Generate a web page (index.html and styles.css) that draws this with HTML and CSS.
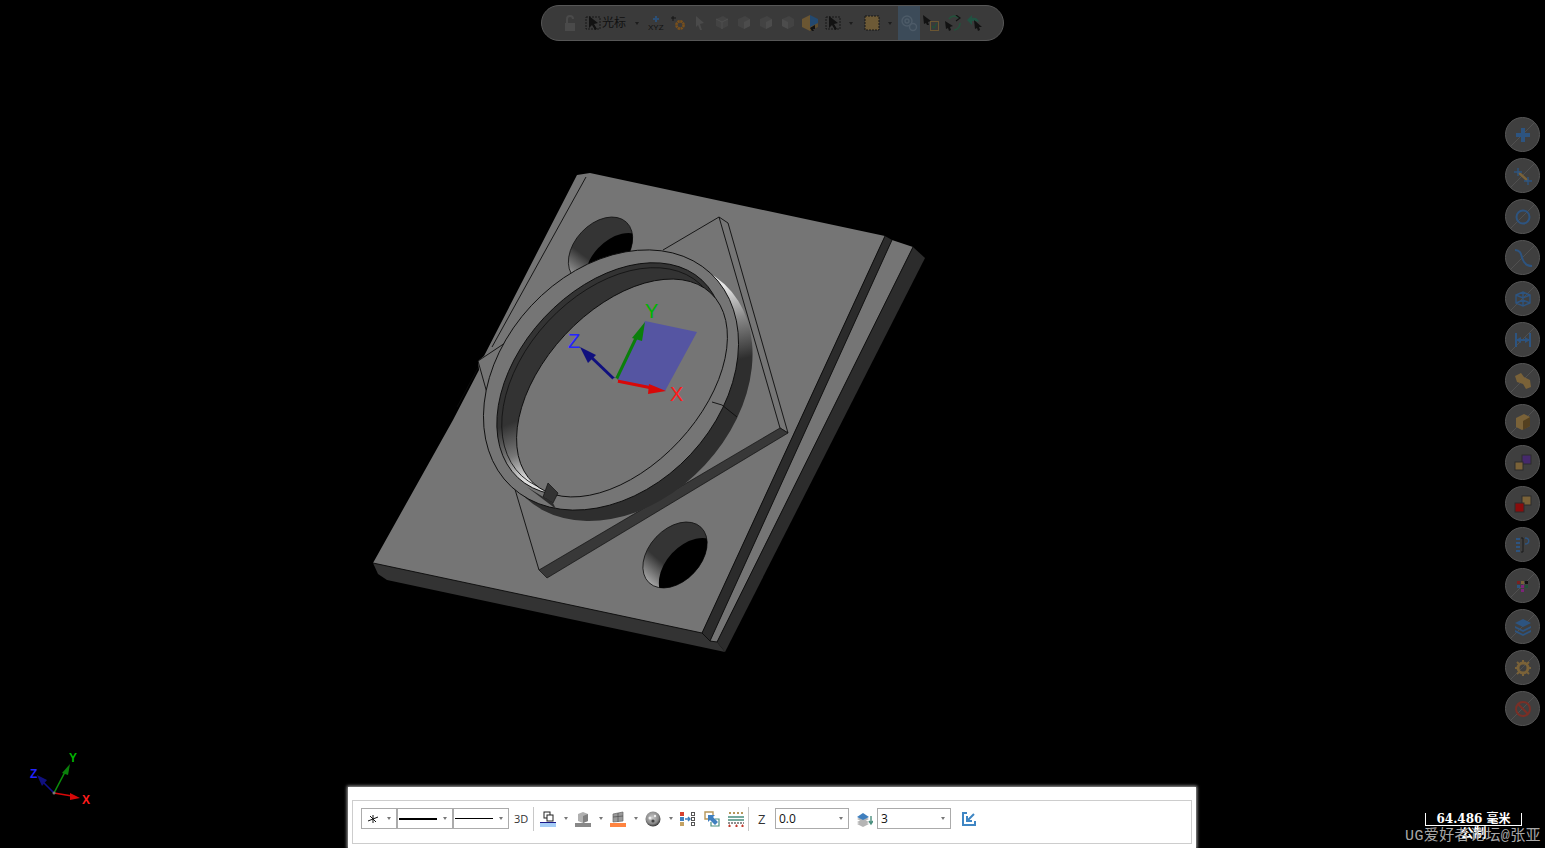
FILE: index.html
```html
<!DOCTYPE html>
<html lang="zh">
<head>
<meta charset="utf-8">
<title>NX</title>
<link rel="stylesheet" href="styles.css">
</head>
<body>
<main class="viewport">
  <svg class="scene" width="1545" height="848" viewBox="0 0 1545 848">
    <defs>
      <linearGradient id="wallGrad" gradientUnits="userSpaceOnUse" x1="728" y1="285" x2="746" y2="358" gradientTransform="rotate(47 625 391)">
        <stop offset="0" stop-color="#e8e8e8"/><stop offset=".45" stop-color="#8a8a8a"/><stop offset="1" stop-color="#2e2e2e"/>
      </linearGradient>
      <linearGradient id="crescentGrad" gradientUnits="userSpaceOnUse" x1="506" y1="425" x2="528" y2="478" gradientTransform="rotate(47 610 379)">
        <stop offset="0" stop-color="#333"/><stop offset=".55" stop-color="#777"/><stop offset="1" stop-color="#ddd"/>
      </linearGradient>
      <linearGradient id="holeGradB" gradientUnits="userSpaceOnUse" x1="665" y1="565" x2="650" y2="582" gradientTransform="rotate(47 675 555)">
        <stop offset="0" stop-color="#343434"/><stop offset="1" stop-color="#a0a0a0"/>
      </linearGradient>
      <linearGradient id="holeGradA" gradientUnits="userSpaceOnUse" x1="590" y1="260" x2="575" y2="280" gradientTransform="rotate(47 600.5 250)">
        <stop offset="0" stop-color="#343434"/><stop offset="1" stop-color="#a0a0a0"/>
      </linearGradient>
      <radialGradient id="sphereGrad" cx=".45" cy=".4" r=".6">
        <stop offset="0" stop-color="#c8c8c8"/><stop offset=".7" stop-color="#8a8a8a"/><stop offset="1" stop-color="#333"/>
      </radialGradient>
      <clipPath id="holeClipA"><ellipse cx="600.5" cy="250" rx="38" ry="26" transform="rotate(-47 600.5 250)"/></clipPath>
      <clipPath id="holeClipB"><ellipse cx="675" cy="555" rx="38" ry="26" transform="rotate(-47 675 555)"/></clipPath>
    </defs>

    <polygon class="side" points="373,563 378,574 387,580 725,652 717,642 710,641 702,633"/>
    <polygon class="face" points="577,175 590,173 885,236 702,633 373,563 453,420 479,370 478,361 484,356"/>
    <polygon class="groove" points="885,236 892,240 710,641 702,633"/>
    <polygon class="face" points="892,240 913,247 717,642 710,641"/>
    <polygon class="side-dark" points="913,247 925,258 725,652 717,642"/>
    <path class="edge" d="M373 563L702 633M885 236L702 633M892 240L710 641M913 247L717 642M586 177L492 347M457 407L478 368M478 361L505 343M478 361L487 393M702 633L710 641M710 641L717 642"/>

    <ellipse class="hole-wall-a" cx="600.5" cy="250" rx="38" ry="26" transform="rotate(-47 600.5 250)"/>
    <g clip-path="url(#holeClipA)"><ellipse class="void" cx="617" cy="266" rx="38" ry="26" transform="rotate(-47 617 266)"/></g>
    <ellipse class="hole-wall-b" cx="675" cy="555" rx="38" ry="26" transform="rotate(-47 675 555)"/>
    <g clip-path="url(#holeClipB)"><ellipse class="void" cx="691" cy="571" rx="38" ry="26" transform="rotate(-47 691 571)"/></g>

    <path class="edge" d="M663 250L719 217L728 223L788 433L780 428L719 217M514 486L539 570"/>
    <polygon class="strip" points="780,428 788,433 547,578 539,570"/>

    <ellipse class="ring-wall" cx="625" cy="391" rx="146" ry="109" transform="rotate(-47 625 391)"/>
    <ellipse class="ring-top" cx="611" cy="380" rx="146" ry="109" transform="rotate(-47 611 380)"/>
    <ellipse class="crescent" cx="610" cy="379" rx="135" ry="90" transform="rotate(-47 610 379)"/>
    <ellipse class="crescent-line" cx="611" cy="380" rx="131" ry="86" transform="rotate(-47 611 380)"/>
    <ellipse class="disc" cx="622" cy="388" rx="130" ry="78" transform="rotate(-47 622 388)"/>
    <path class="edge" d="M712 402L722 405L737 417"/>
    <polygon class="notch" points="548,483 558,493 553,503 543,497"/>
    <polygon class="notch-tail" points="527,487 553,503 556,509"/>

    <polygon class="plane" points="645,321 697,332 665,391 616,381"/>
    <path class="shaft-y" d="M616 380L637 336"/>
    <polygon class="head-y" points="645,322 642,341 632,338"/>
    <path class="shaft-z" d="M614 379L590 356"/>
    <polygon class="head-z" points="580,347 596,355 588,363"/>
    <path class="shaft-x" d="M617 381L652 388"/>
    <polygon class="head-x" points="666,391 649,384 648,394"/>
    <circle class="origin" cx="615" cy="381" r="3"/>
    <text class="axis axis-y" x="645" y="318">Y</text>
    <text class="axis axis-z" x="568" y="348">Z</text>
    <text class="axis axis-x" x="670" y="401">X</text>

    <path class="mini-y" d="M54 793L65 772"/>
    <polygon class="head-y" points="70,764 68,775 62,773"/>
    <path class="mini-z" d="M54 793L43 782"/>
    <polygon class="head-z" points="37,775 47,780 42,786"/>
    <path class="mini-x" d="M54 793L72 796"/>
    <polygon class="head-x" points="80,798 70,793 70,800"/>
    <circle class="origin" cx="54" cy="793" r="1.5"/>
    <text class="mini-label axis-y" x="69" y="762">Y</text>
    <text class="mini-label axis-z" x="30" y="778">Z</text>
    <text class="mini-label axis-x" x="82" y="804">X</text>
  </svg>

  <nav class="pill">
    <span class="cell"><svg class="ico" viewBox="0 0 16 16"><path class="dim-line" d="M5 8V4a3 3 0 0 1 6 0"/><rect class="dim-fill" x="3" y="8" width="10" height="8"/></svg></span>
    <span class="cell cell-gap"><svg class="ico" viewBox="0 0 16 16"><rect class="dash-black" x="1" y="2" width="14" height="12"/><path class="blk" d="M4 1L13 8L9 9L12 14L10 15L7 10L4 13Z"/></svg></span>
    <span class="pill-label">光标</span>
    <span class="caret-cell"><i class="caret-dim"></i></span>
    <span class="cell cell-gap2"><svg class="ico" viewBox="0 0 16 16"><path class="blue-line" d="M8 1V7M5 4H11"/><text class="xyz" x="0" y="15">XYZ</text></svg></span>
    <span class="cell"><svg class="ico" viewBox="0 0 16 16"><path class="blk-line" d="M3 1V6M1 3H6"/><circle class="gear-dim" cx="10" cy="10" r="3.6"/></svg></span>
    <span class="cell"><svg class="ico" viewBox="0 0 16 16"><path class="grey-arrow" d="M4 1L12 8L8 9L10 15L8 15L6 10L4 12Z"/></svg></span>
    <span class="cell"><svg class="ico" viewBox="0 0 16 16"><path class="c1" d="M2 4L9 1L14 4V11L8 14L2 11Z"/><path class="c2" d="M2 4L8 7L14 4M8 7V14"/></svg></span>
    <span class="cell"><svg class="ico" viewBox="0 0 16 16"><path class="c1" d="M2 4L9 1L14 4V11L8 14L2 11Z"/><path class="c3" d="M8 7L14 4V11L8 14Z"/></svg></span>
    <span class="cell"><svg class="ico" viewBox="0 0 16 16"><path class="c1" d="M2 4L9 1L14 4V11L8 14L2 11Z"/><path class="c3" d="M8 7L14 4V11L8 14Z"/></svg></span>
    <span class="cell"><svg class="ico" viewBox="0 0 16 16"><path class="c1" d="M2 4L9 1L14 4V11L8 14L2 11Z"/><path class="c3" d="M2 4L8 7V14L2 11Z"/></svg></span>
    <span class="cell"><svg class="ico-lg" viewBox="0 0 18 18"><path class="iso-tan" d="M1 5L9 1V17L1 13Z"/><path class="iso-tan2" d="M9 9L17 5V13L9 17Z"/><path class="iso-blue" d="M9 1L17 5V9L9 13Z"/><path class="blk" d="M9 14L14 11V15L12 15L13 17H11Z"/></svg></span>
    <span class="cell cell-gap"><svg class="ico" viewBox="0 0 16 16"><rect class="dash-black" x="1" y="2" width="14" height="12"/><path class="blk" d="M4 1L13 8L9 9L12 14L10 15L7 10L4 13Z"/></svg></span>
    <span class="caret-cell caret-gap"><i class="caret-dim"></i></span>
    <span class="cell cell-gap3"><svg class="ico" viewBox="0 0 16 16"><rect class="dash-tan" x="1" y="1" width="14" height="14"/></svg></span>
    <span class="caret-cell caret-gap"><i class="caret-dim"></i></span>
    <span class="cell cell-on"><svg class="ico-lg" viewBox="0 0 18 18"><circle class="ring-dim" cx="7" cy="7" r="5"/><circle class="ring-dim" cx="7" cy="7" r="2"/><circle class="ring-dim" cx="13" cy="13" r="3.5"/></svg></span>
    <span class="cell"><svg class="ico" viewBox="0 0 16 16"><path class="blk" d="M0 0L8 6L5 7L6 10L4 10L3 8L1 9Z"/><rect class="clip" x="7.5" y="6.5" width="8" height="9"/><path class="clip-check" d="M9 11L11 13L14 8"/></svg></span>
    <span class="cell"><svg class="ico" viewBox="0 0 16 16"><path class="blk" d="M0 6L8 11L5 12L6 15L4 16L3 13L1 14Z"/><path class="cyc-g" d="M4 4A6.5 6.5 0 0 1 14 3M15 8A6.5 6.5 0 0 1 9 15"/><path class="cyc-k" d="M11 0L15 3L11 6"/></svg></span>
    <span class="cell"><svg class="ico" viewBox="0 0 16 16"><path class="undo" d="M0 5L5 0V3C8 2 11 3 12 7L9 6L5 6V10Z"/><path class="blk" d="M7 5L15 12L12 12L13 15L11 16L10 13L8 14Z"/></svg></span>
  </nav>

  <aside class="rail">
    <div class="fab diag"><svg class="fab-ico" viewBox="0 0 20 20"><path class="t-blue-thick" d="M10 3V17M3 10H17"/></svg></div>
    <div class="fab diag"><svg class="fab-ico" viewBox="0 0 20 20"><path class="t-tan" d="M5 6L15 15"/><path class="t-blue" d="M5 2V10M1 6H9M15 11V19M11 15H19"/></svg></div>
    <div class="fab diag"><svg class="fab-ico" viewBox="0 0 20 20"><circle class="t-blue-ring" cx="10" cy="10" r="6.5"/></svg></div>
    <div class="fab diag"><svg class="fab-ico" viewBox="0 0 20 20"><path class="t-blue-ring" d="M2 2C9 2 8 9 10 12C12 17 15 18 19 18"/></svg></div>
    <div class="fab diag"><svg class="fab-ico" viewBox="0 0 20 20"><path class="t-blue" d="M3 6L10 3L17 6V14L10 17L3 14ZM3 6L10 9L17 6M10 9V17M3 14L10 11L17 14M10 3V11"/></svg></div>
    <div class="fab diag"><svg class="fab-ico" viewBox="0 0 20 20"><path class="t-blue-ring" d="M3 3V17M17 3V17M3 10H17"/><path class="t-blue-fill" d="M3 10L8 7V13ZM17 10L12 7V13Z"/></svg></div>
    <div class="fab diag"><svg class="fab-ico" viewBox="0 0 20 20"><path class="t-tan-fill" d="M2 5L8 2L11 6L17 9L18 16L13 18L10 13L4 11Z"/></svg></div>
    <div class="fab diag"><svg class="fab-ico" viewBox="0 0 20 20"><path class="t-tan-fill" d="M3 6L11 2L17 5V14L9 18L3 15Z"/><path class="t-brown" d="M10 9L17 5V14L10 18Z"/></svg></div>
    <div class="fab"><svg class="fab-ico" viewBox="0 0 20 20"><rect class="t-purple" x="9" y="2" width="9" height="9"/><rect class="t-tan-box" x="2" y="9" width="8" height="8"/></svg></div>
    <div class="fab"><svg class="fab-ico" viewBox="0 0 20 20"><rect class="t-tan-box" x="9" y="2" width="9" height="9"/><rect class="t-red" x="2" y="9" width="9" height="9"/></svg></div>
    <div class="fab"><svg class="fab-ico" viewBox="0 0 20 20"><path class="t-blue-fill" d="M3 3H7V5H3ZM3 7H7V9H3ZM3 11H7V13H3ZM3 15H7V17H3Z"/><path class="t-line" d="M8 3H10V17H8"/><path class="t-blue" d="M12 3C17 3 17 9 12 9"/></svg></div>
    <div class="fab diag"><svg class="fab-ico" viewBox="0 0 20 20"><rect class="p-red" x="4" y="5" width="3" height="3"/><rect class="p-tan" x="8" y="5" width="3" height="3"/><rect class="p-black" x="12" y="5" width="3" height="3"/><rect class="p-blue" x="4" y="9" width="3" height="3"/><rect class="p-mag" x="8" y="9" width="3" height="3"/><rect class="p-green" x="12" y="9" width="3" height="3"/><rect class="p-mag" x="8" y="13" width="3" height="3"/></svg></div>
    <div class="fab diag"><svg class="fab-ico" viewBox="0 0 20 20"><path class="t-stack" d="M10 2L18 6L10 10L2 6ZM2 9L10 13L18 9V11L10 15L2 11ZM2 13L10 17L18 13V15L10 19L2 15Z"/></svg></div>
    <div class="fab diag"><svg class="fab-ico" viewBox="0 0 20 20"><circle class="t-gear" cx="10" cy="10" r="5"/><path class="t-gear-teeth" d="M10 2V5M10 15V18M2 10H5M15 10H18M4 4L6 6M14 14L16 16M16 4L14 6M6 14L4 16"/></svg></div>
    <div class="fab diag"><svg class="fab-ico" viewBox="0 0 20 20"><circle class="t-no" cx="10" cy="10" r="7"/><path class="t-no" d="M5 5L15 15"/></svg></div>
  </aside>

  <section class="dock">
    <div class="dock-frame">
      <div class="sel sel-a"><svg class="sel-ico" viewBox="0 0 12 12"><path class="k1" d="M1 8L11 4M6 2V10M3 3L9 9"/></svg><i class="caret"></i></div>
      <div class="sel sel-b"><span class="rule rule-thick"></span><i class="caret"></i></div>
      <div class="sel sel-b"><span class="rule rule-thin"></span><i class="caret"></i></div>
      <span class="dock-3d">3D</span>
      <span class="dock-sep"></span>
      <svg class="dico dico-first" viewBox="0 0 16 16"><rect class="k1-r" x="4" y="1" width="6" height="6"/><rect class="k1-w" x="7" y="4" width="6" height="6"/><rect class="navy" x="0" y="11" width="16" height="1"/><rect class="sky" x="0" y="12" width="16" height="4"/></svg>
      <span class="dcaret"><i class="caret"></i></span>
      <svg class="dico" viewBox="0 0 16 16"><path class="cube-l" d="M3 3L8 1L13 3V10L8 12L3 10Z"/><path class="cube-d" d="M8 5L13 3V10L8 12Z"/><rect class="grey-bar" x="0" y="12" width="16" height="4"/></svg>
      <span class="dcaret"><i class="caret"></i></span>
      <svg class="dico" viewBox="0 0 16 16"><path class="win" d="M3 3L13 1V10L3 11Z"/><path class="win-l" d="M3 6L13 5M8 2V11"/><rect class="orange-bar" x="0" y="12" width="16" height="4"/></svg>
      <span class="dcaret"><i class="caret"></i></span>
      <svg class="dico" viewBox="0 0 16 16"><circle class="sphere" cx="8" cy="8" r="7.5"/><circle class="sphere-h" cx="5" cy="7" r="1.5"/><circle class="sphere-h" cx="10" cy="5" r="1.2"/><circle class="sphere-d" cx="8" cy="10" r="1.6"/></svg>
      <span class="dcaret"><i class="caret"></i></span>
      <svg class="dico" viewBox="0 0 16 16"><rect class="red" x="0" y="1" width="4" height="4"/><rect class="blue" x="0" y="6" width="4" height="4"/><rect class="tan" x="0" y="11" width="4" height="4"/><path class="blue-stroke" d="M5 8H10M8 6L10 8L8 10"/><rect class="k-box" x="11.5" y="1.5" width="3" height="3"/><rect class="k-box" x="11.5" y="6.5" width="3" height="3"/><rect class="k-box" x="11.5" y="11.5" width="3" height="3"/></svg>
      <svg class="dico dico-gap" viewBox="0 0 16 16"><path class="tan-stroke" d="M5 8H1V1H9V5"/><path class="teal-stroke" d="M11 8H15V15H7V11"/><path class="blue-arrow" d="M4 4L11 4L9 6L14 11L11 14L6 9L4 11Z"/></svg>
      <svg class="dico dico-gap" viewBox="0 0 16 16"><path class="tan-dots" d="M1 2H15"/><path class="teal-thick" d="M0 6H16M0 9H16"/><path class="k-dash" d="M0 12H16"/><path class="plus-row" d="M0 15H3M1.5 13.5V16.5M7 15H10M8.5 13.5V16.5M13 15H16M14.5 13.5V16.5"/></svg>
      <span class="dock-sep dock-sep-b"></span>
      <span class="dock-z">Z</span>
      <div class="sel sel-c"><span class="val">0.0</span><i class="caret"></i></div>
      <svg class="dico dico-layers" viewBox="0 0 16 16"><path class="stack-g" d="M0 8L6 5L12 8L6 11ZM0 11L6 8L12 11L6 14ZM0 13L6 10L12 13L6 16Z"/><path class="stack-b" d="M0 6L6 2L12 6L6 9Z"/><path class="teal-stroke2" d="M14 5V12M12 10L14 13L16 10"/></svg>
      <div class="sel sel-d"><span class="val">3</span><i class="caret"></i></div>
      <svg class="dico dico-end" viewBox="0 0 16 16"><path class="end-stroke" d="M6 2H2V14H14V10M13 3L6 10M6 5V10H11"/></svg>
    </div>
  </section>

  <div class="scale">
    <div class="scale-value">64.486 毫米</div>
    <div class="scale-unit">公制</div>
  </div>
  <div class="watermark">UG爱好者论坛@张亚</div>
</main>
</body>
</html>
```
FILE: styles.css
```css
* { box-sizing: border-box; }
html, body { margin: 0; padding: 0; background: #000; }
body { width: 1545px; height: 848px; overflow: hidden; }
.viewport { position: relative; width: 1545px; height: 848px; background: #000; overflow: hidden; }
.scene { position: absolute; left: 0; top: 0; display: block; }

/* model */
.face { fill: #757575; }
.side { fill: #333; }
.side-dark { fill: #2c2c2c; }
.groove { fill: #2b2b2b; }
.strip { fill: #383838; stroke: #111; stroke-width: .7; }
.edge { fill: none; stroke: #0c0c0c; stroke-width: .9; }
.void { fill: #000; }
.hole-wall-a { fill: url(#holeGradA); stroke: #111; stroke-width: .8; }
.hole-wall-b { fill: url(#holeGradB); stroke: #111; stroke-width: .8; }
.ring-wall { fill: url(#wallGrad); }
.ring-top { fill: #757575; stroke: #0c0c0c; stroke-width: .9; }
.crescent { fill: url(#crescentGrad); stroke: #0c0c0c; stroke-width: .9; }
.crescent-line { fill: none; stroke: #111; stroke-width: .8; }
.disc { fill: #757575; stroke: #0c0c0c; stroke-width: .9; }
.notch { fill: #333; stroke: #111; stroke-width: .7; }
.notch-tail { fill: #2c2c2c; }
.plane { fill: #5555a2; }
.shaft-y { stroke: #0b7f0b; stroke-width: 3; }
.shaft-z { stroke: #10107e; stroke-width: 3; }
.shaft-x { stroke: #d80808; stroke-width: 3; }
.head-y { fill: #0b7f0b; }
.head-z { fill: #10107e; }
.head-x { fill: #d80808; }
.mini-y { stroke: #0b8f0b; stroke-width: 1.6; }
.mini-z { stroke: #10108e; stroke-width: 1.6; }
.mini-x { stroke: #d80808; stroke-width: 1.6; }
.origin { fill: #777; }
.axis { font: 20px "Liberation Sans", Arial, sans-serif; }
.mini-label { font: bold 12px "Liberation Sans", Arial, sans-serif; }
.axis-y { fill: #00b400; }
.axis-z { fill: #2424ff; }
.axis-x { fill: #ff1c1c; }

/* top toolbar */
.pill {
  position: absolute; left: 541px; top: 5px; width: 463px; height: 36px;
  display: flex; align-items: stretch; padding-left: 17px;
  background: #3a3a3a; border: 1px solid #565656; border-radius: 18px;
  overflow: hidden;
}
.cell { width: 22px; display: flex; align-items: center; justify-content: center; flex: none; }
.cell-gap { margin-left: 1px; }
.cell-gap2 { margin-left: 3px; }
.cell-gap3 { margin-left: 5px; }
.cell-on { background: #3c4b59; margin-left: 3px; }
.ico { width: 16px; height: 16px; display: block; }
.ico-lg { width: 18px; height: 18px; display: block; }
.pill-label { width: 27px; flex: none; margin-left: -2px; margin-right: 2px; font: 12px/32px "Noto Sans CJK SC", sans-serif; color: #111; }
.caret-cell { width: 10px; flex: none; display: flex; align-items: center; justify-content: center; margin-left: 1px; }
.caret-gap { margin-left: 2px; }
.caret-dim { width: 0; height: 0; border: 2.5px solid transparent; border-top: 3px solid #1c1c1c; border-bottom: 0; }
.dim-line { fill: none; stroke: #4a4a4a; stroke-width: 2; }
.dim-fill { fill: #4a4a4a; }
.dash-black { fill: none; stroke: #161616; stroke-width: 1; stroke-dasharray: 2 1; }
.dash-tan { fill: #6d5a36; stroke: #161616; stroke-width: 1; stroke-dasharray: 2 1; }
.blk { fill: #121212; }
.blk-line { fill: none; stroke: #151515; stroke-width: 1; }
.blue-line { fill: none; stroke: #2c4f75; stroke-width: 2; }
.xyz { font: 8px "Liberation Sans", sans-serif; fill: #111; }
.gear-dim { fill: none; stroke: #79501c; stroke-width: 2.6; stroke-dasharray: 2.2 .6; }
.grey-arrow { fill: #4a4a4a; }
.c1 { fill: #434343; }
.c2 { fill: none; stroke: #4e4e4e; stroke-width: 1; }
.c3 { fill: #4c4c4c; }
.iso-tan { fill: #6b5632; }
.iso-tan2 { fill: #5e4c2c; }
.iso-blue { fill: #23496f; }
.ring-dim { fill: none; stroke: #4d5b68; stroke-width: 1.4; }
.clip { fill: none; stroke: #6b5632; stroke-width: 1; }
.clip-check { fill: none; stroke: #205238; stroke-width: 1.2; }
.cyc-g { fill: none; stroke: #24503b; stroke-width: 1.6; }
.cyc-k { fill: none; stroke: #121212; stroke-width: 1.2; }
.undo { fill: #215242; }

/* right rail */
.rail { position: absolute; left: 1505px; top: 117px; display: flex; flex-direction: column; gap: 6px; }
.fab {
  width: 35px; height: 35px; border-radius: 50%; flex: none;
  display: flex; align-items: center; justify-content: center;
  background-color: #3f3f3f; border: 1px solid #555;
}
.diag { background-image: linear-gradient(135deg, transparent 49.4%, #505050 49.4%, #505050 50.6%, transparent 50.6%); }
.fab-ico { width: 20px; height: 20px; display: block; }
.t-blue-thick { fill: none; stroke: #2d5480; stroke-width: 4; }
.t-blue { fill: none; stroke: #2d5480; stroke-width: 1.4; }
.t-blue-ring { fill: none; stroke: #2d5480; stroke-width: 2; }
.t-blue-fill { fill: #2d5480; }
.t-tan { fill: none; stroke: #7a6238; stroke-width: 2.4; }
.t-tan-fill { fill: #7a6238; }
.t-brown { fill: #54401f; }
.t-purple { fill: #45296c; stroke: #2c2c2c; }
.t-tan-box { fill: #7a6238; stroke: #2c2c2c; }
.t-red { fill: #8a0c0c; stroke: #2c2c2c; }
.t-line { fill: none; stroke: #1a1a1a; stroke-width: 1; }
.p-red { fill: #7a2020; }
.p-tan { fill: #7a6238; }
.p-black { fill: #111; }
.p-blue { fill: #2d5480; }
.p-mag { fill: #7c2478; }
.p-green { fill: #205238; }
.t-stack { fill: #2d5480; }
.t-gear { fill: none; stroke: #7a6238; stroke-width: 3; }
.t-gear-teeth { fill: none; stroke: #7a6238; stroke-width: 2; }
.t-no { fill: none; stroke: #7a2f26; stroke-width: 2; }

/* bottom dock */
.dock {
  position: absolute; left: 348px; top: 787px; width: 848px; height: 61px;
  background: #fff; padding: 13px 4px 4px;
  box-shadow: 0 0 3px 1px rgba(225, 225, 225, .75);
}
.dock-frame {
  height: 44px; border: 1px solid #cdcdcd; padding: 0 0 7px 8px;
  display: flex; align-items: center;
}
.sel {
  height: 21px; border: 1px solid #ababab; background: #fff; flex: none;
  display: flex; align-items: center; position: relative;
}
.sel-a { width: 36px; padding-left: 5px; }
.sel-b { width: 56px; padding-left: 1px; }
.sel-c { width: 74px; padding-left: 3px; }
.sel-d { width: 74px; padding-left: 3px; margin-left: 4px; }
.sel-ico { width: 12px; height: 12px; display: block; }
.caret { width: 0; height: 0; display: block; border: 2.5px solid transparent; border-top: 3px solid #777; border-bottom: 0; }
.sel .caret { position: absolute; right: 5px; top: 8px; }
.rule { display: block; width: 38px; background: #000; }
.rule-thick { height: 2px; }
.rule-thin { height: 1px; }
.dock-3d { width: 24px; flex: none; padding-left: 5px; font: 11px "Open Sans", "Liberation Sans", sans-serif; color: #333; }
.dock-sep { width: 1px; height: 24px; background: #c8c8c8; flex: none; }
.dock-sep-b { margin-left: 4px; }
.dock-z { width: 26px; flex: none; text-align: left; padding-left: 9px; font: 13px "Open Sans", "Liberation Sans", sans-serif; color: #333; }
.val { font: 12px "Open Sans", "Liberation Sans", sans-serif; color: #111; }
.dico { width: 16px; height: 16px; display: block; flex: none; }
.dico-first { margin-left: 6px; }
.dico-gap { margin-left: 8px; }
.dico-layers { margin-left: 8px; }
.dico-end { margin-left: 10px; }
.dcaret { width: 19px; flex: none; display: flex; justify-content: center; }
.k1 { fill: none; stroke: #111; stroke-width: 1; }
.k1-r { fill: none; stroke: #222; stroke-width: 1; }
.k1-w { fill: #fff; stroke: #222; stroke-width: 1; }
.navy { fill: #1a1a8a; }
.sky { fill: #a5cdf7; }
.cube-l { fill: #b0b0b0; }
.cube-d { fill: #808080; }
.grey-bar { fill: #888; }
.win { fill: #999; stroke: #666; stroke-width: .7; }
.win-l { fill: none; stroke: #555; stroke-width: .8; }
.orange-bar { fill: #ff8440; }
.sphere { fill: url(#sphereGrad); }
.sphere-h { fill: #eee; }
.sphere-d { fill: #444; }
.red { fill: #d8412f; }
.blue { fill: #3f7fbe; }
.tan { fill: #c4a263; }
.blue-stroke { fill: none; stroke: #3f7fbe; stroke-width: 1.4; }
.k-box { fill: #fff; stroke: #555; stroke-width: 1; }
.tan-stroke { fill: none; stroke: #b6965a; stroke-width: 1.4; }
.tan-dots { fill: none; stroke: #b6965a; stroke-width: 2; stroke-dasharray: 2 2; }
.teal-stroke { fill: none; stroke: #4a8f7e; stroke-width: 1.2; }
.teal-thick { fill: none; stroke: #4a8f7e; stroke-width: 1.6; }
.teal-stroke2 { fill: none; stroke: #4a8f7e; stroke-width: 1.4; }
.k-dash { fill: none; stroke: #222; stroke-width: 1; stroke-dasharray: 2 1; }
.plus-row { fill: none; stroke: #c0392b; stroke-width: 1; }
.blue-arrow { fill: #3f7fbe; }
.stack-g { fill: #b5b5b5; }
.stack-b { fill: #3f7fbe; }
.end-stroke { fill: none; stroke: #3f86c4; stroke-width: 2; }

/* scale + watermark */
.scale {
  position: absolute; left: 1425px; top: 813px; width: 97px; height: 13px;
  border-left: 1px solid #fff; border-right: 1px solid #fff; border-bottom: 1px solid #fff;
  color: #fff; text-align: center;
}
.scale-value { font: bold 12px/12px "DejaVu Serif", "Noto Sans CJK SC", serif; white-space: nowrap; }
.scale-unit { font: bold 13px/14px "Noto Sans CJK SC", serif; }
.watermark {
  position: absolute; left: 1405px; top: 827px; width: 140px; letter-spacing: .4px;
  font: 15px/20px "Liberation Mono", "Noto Sans CJK SC", monospace;
  color: #a8a8a8; white-space: nowrap;
}
```
